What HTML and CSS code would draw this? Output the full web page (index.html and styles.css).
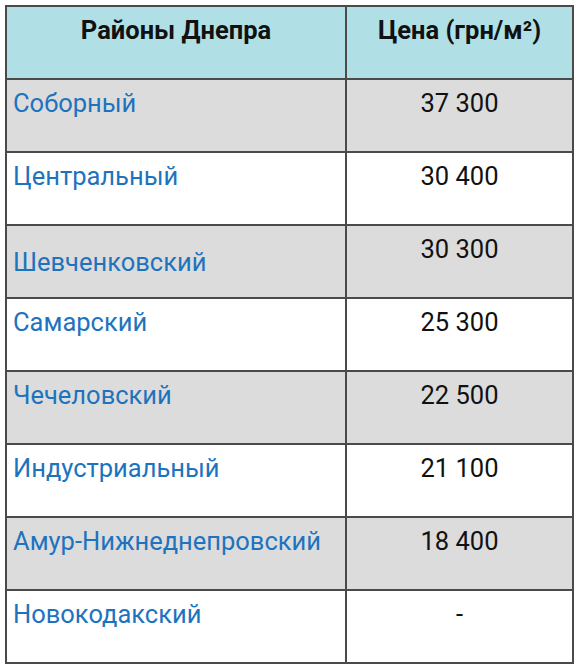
FILE: index.html
```html
<!DOCTYPE html>
<html lang="ru">
<head>
<meta charset="utf-8">
<link rel="stylesheet" href="styles.css">
</head>
<body>
<table class="prices">
  <thead>
    <tr class="head-row">
      <th>Районы Днепра</th>
      <th>Цена (грн/м²)</th>
    </tr>
  </thead>
  <tbody>
    <tr class="alt"><td><a href="#">Соборный</a></td><td class="num">37 300</td></tr>
    <tr><td><a href="#">Центральный</a></td><td class="num">30 400</td></tr>
    <tr class="alt"><td class="low"><a href="#">Шевченковский</a></td><td class="num">30 300</td></tr>
    <tr><td><a href="#">Самарский</a></td><td class="num">25 300</td></tr>
    <tr class="alt"><td><a href="#">Чечеловский</a></td><td class="num">22 500</td></tr>
    <tr><td><a href="#">Индустриальный</a></td><td class="num">21 100</td></tr>
    <tr class="alt"><td><a href="#">Амур-Нижнеднепровский</a></td><td class="num">18 400</td></tr>
    <tr><td><a href="#">Новокодакский</a></td><td class="num">-</td></tr>
  </tbody>
</table>
</body>
</html>
```

FILE: styles.css
```css
html, body {
  margin: 0;
  padding: 0;
  background: #ffffff;
}
body {
  padding: 5px 6px 5px 5px;
  font-family: Roboto, "Noto Sans", sans-serif;
}
.prices {
  width: 569px;
  border-collapse: collapse;
  table-layout: fixed;
  border: 2px solid #4a4a4a;
}
.prices th, .prices td {
  border: 2px solid #4a4a4a;
  height: 73px;
  box-sizing: border-box;
  vertical-align: top;
  padding: 5px 6px 0 6px;
  font-size: 25.5px;
  line-height: 36px;
  color: #111;
}
.prices th:first-child, .prices td:first-child {
  width: 340px;
}
.prices th {
  background: #b0e0e6;
  font-weight: bold;
  text-align: center;
}
.prices tr.alt td {
  background: #dcdcdc;
}
.prices td.num {
  text-align: center;
}
.prices td.low {
  padding-top: 18px;
}
.prices a {
  color: #1e73be;
  text-decoration: none;
}
```
